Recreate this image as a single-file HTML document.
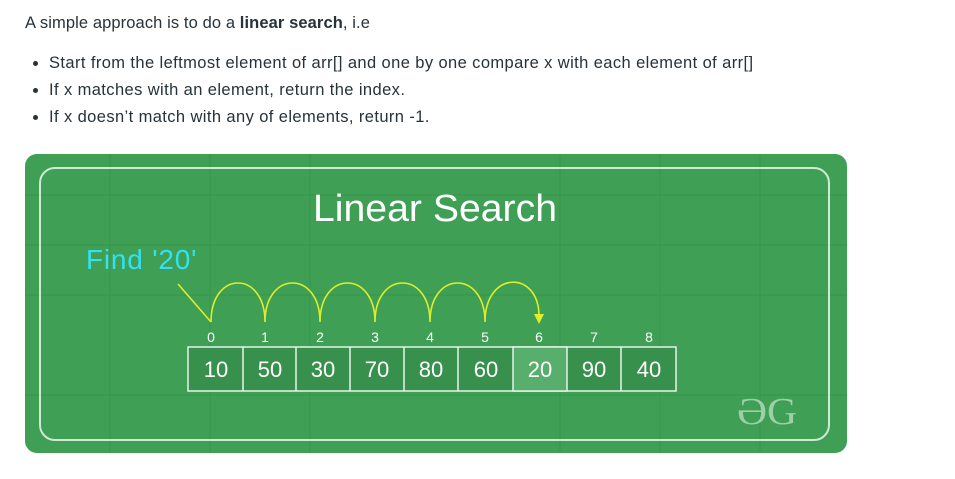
<!DOCTYPE html>
<html><head><meta charset="utf-8"><style>
body{margin:0;background:#fff;width:955px;height:479px;overflow:hidden;font-family:"Liberation Sans",sans-serif;color:#273239;}
p{position:absolute;left:25px;top:14px;margin:0;font-size:16.5px;letter-spacing:0.1px;}
ul{position:absolute;left:0;top:50px;margin:0;padding-left:49px;font-size:16.5px;letter-spacing:0.4px;}
li{height:27px;line-height:27px;}
svg{position:absolute;left:0;top:0}
</style></head><body>
<p>A simple approach is to do a <b>linear search</b>, i.e</p>
<ul><li>Start from the leftmost element of arr[] and one by one compare x with each element of arr[]</li>
<li>If x matches with an element, return the index.</li>
<li>If x doesn’t match with any of elements, return -1.</li></ul>
<svg width="955" height="479" font-family="Liberation Sans, sans-serif">
<rect x="25" y="154" width="822" height="299" rx="12" fill="#3e9f55"/>
<g stroke="#37974d" stroke-width="1.5" opacity=".7">
<line x1="25" y1="195" x2="847" y2="195"/><line x1="25" y1="245" x2="847" y2="245"/><line x1="25" y1="295" x2="847" y2="295"/><line x1="25" y1="395" x2="847" y2="395"/>
<line x1="110" y1="154" x2="110" y2="453"/><line x1="210" y1="154" x2="210" y2="453"/><line x1="310" y1="154" x2="310" y2="453"/><line x1="560" y1="154" x2="560" y2="453"/><line x1="660" y1="154" x2="660" y2="453"/><line x1="760" y1="154" x2="760" y2="453"/>
</g>
<rect x="40" y="168" width="789" height="272" rx="15" fill="none" stroke="#cfe9d4" stroke-width="2"/>
<text x="313" y="221" font-size="38" fill="#fff" textLength="244" lengthAdjust="spacingAndGlyphs">Linear Search</text>
<text x="86" y="269" font-size="28" fill="#35e0f0" letter-spacing="0.8">Find '20'</text>
<g fill="none" stroke="#dfee2a" stroke-width="1.6">
<path d="M178 284 L211 322"/>
<path d="M211 322 C211 270 265 270 265 322 C265 270 320 270 320 322 C320 270 375 270 375 322 C375 270 430 270 430 322 C430 270 485 270 485 322 C485 270 539 270 539 316"/>
</g>
<path d="M534 314 L544 314 L539 324Z" fill="#dfee2a"/>
<g font-size="14" fill="#fff" text-anchor="middle">
<text x="211" y="342">0</text><text x="265" y="342">1</text><text x="320" y="342">2</text><text x="375" y="342">3</text><text x="430" y="342">4</text><text x="485" y="342">5</text><text x="539" y="342">6</text><text x="594" y="342">7</text><text x="649" y="342">8</text>
</g>
<rect x="188" y="347" width="488" height="44" fill="#37914c" stroke="#e6f4e9" stroke-width="1.5"/>
<rect x="513" y="347" width="54" height="44" fill="#58ae6c" stroke="#e6f4e9" stroke-width="1.5"/>
<g stroke="#e6f4e9" stroke-width="1.5">
<line x1="243" y1="347" x2="243" y2="391"/><line x1="296" y1="347" x2="296" y2="391"/><line x1="350" y1="347" x2="350" y2="391"/><line x1="404" y1="347" x2="404" y2="391"/><line x1="458" y1="347" x2="458" y2="391"/><line x1="621" y1="347" x2="621" y2="391"/>
</g>
<g font-size="22" fill="#fff" text-anchor="middle">
<text x="216" y="377">10</text><text x="270" y="377">50</text><text x="323" y="377">30</text><text x="377" y="377">70</text><text x="431" y="377">80</text><text x="486" y="377">60</text><text x="540" y="377">20</text><text x="594" y="377">90</text><text x="649" y="377">40</text>
</g>
<text x="737" y="424" font-size="38" fill="#9ed0a8" font-family="Liberation Serif, serif" textLength="60" lengthAdjust="spacingAndGlyphs">ƏG</text>
</svg>
</body></html>
